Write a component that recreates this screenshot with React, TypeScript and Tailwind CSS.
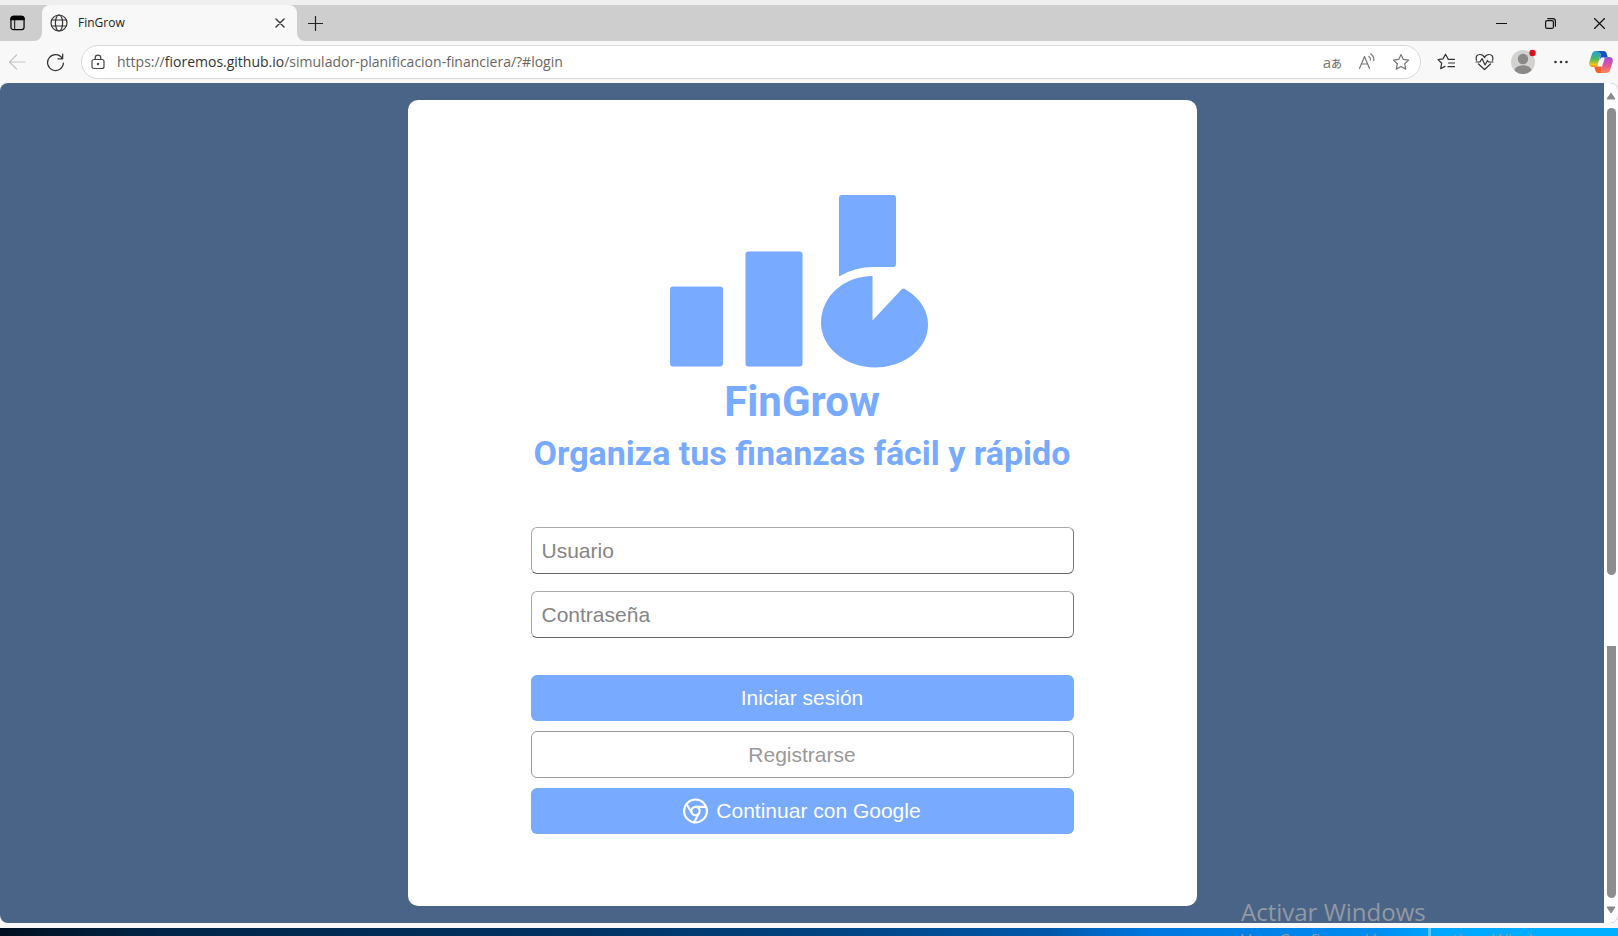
import React from "react";

const stroke = { fill: "none", stroke: "currentColor", strokeLinecap: "round", strokeLinejoin: "round" } as const;

function TabStrip() {
  return (
    <div className="flex h-9 bg-[#cecece]">
      <button aria-label="Acciones de pestañas" className="flex w-[42px] items-center justify-center pr-2">
        <svg width="15" height="16" viewBox="0 0 16 16" {...stroke} strokeWidth="1.3">
          <rect x="1" y="1" width="14" height="14" rx="2.5" />
          <path d="M1 3.5A2.5 2.5 0 0 1 3.5 1h9A2.5 2.5 0 0 1 15 3.5V4.500H1z" fill="#000" />
          <path d="M5 5v10" strokeWidth="1" />
        </svg>
      </button>
      <div className="relative flex w-[255px] items-center rounded-t-lg bg-[#f8f8f8] pl-2 pr-3">
        <svg className="absolute -left-2 bottom-0" width="8" height="8"><path d="M8 0v8H0a8 8 0 0 0 8-8z" fill="#f8f8f8" /></svg>
        <svg className="absolute -right-2 bottom-0" width="8" height="8"><path d="M0 0v8h8a8 8 0 0 1-8-8z" fill="#f8f8f8" /></svg>
        <svg width="18" height="18" viewBox="0 0 18 18" {...stroke} strokeWidth="1.2" className="text-[#333]">
          <circle cx="9" cy="9" r="8" />
          <ellipse cx="9" cy="9" rx="3.6" ry="8" />
          <path d="M1.700 6h14.600M1.700 12h14.600" />
        </svg>
        <span className="ml-2.5 grow text-xs text-[#222]">FinGrow</span>
        <button aria-label="Cerrar pestaña" className="text-[#333]">
          <svg width="10" height="10" viewBox="0 0 10 10" {...stroke} strokeWidth="1.400"><path d="M1 1l8 8M9 1L1 9" /></svg>
        </button>
      </div>
      <button aria-label="Nueva pestaña" className="ml-[11px] text-[#222]">
        <svg width="15" height="15" viewBox="0 0 15 15" {...stroke} strokeWidth="1.200"><path d="M7.500 .5v14M.5 7.500h14" /></svg>
      </button>
      <div className="ml-auto flex items-center gap-[38px] pr-[13px] text-[#111]">
        <button aria-label="Minimizar"><svg width="11" height="11" viewBox="0 0 11 11" {...stroke} strokeWidth="1.200"><path d="M.5 5.500h10" /></svg></button>
        <button aria-label="Restaurar">
          <svg width="11" height="11" viewBox="0 0 11 11" {...stroke} strokeWidth="1.200">
            <rect x=".6" y="2.600" width="7.800" height="7.800" rx="1.500" />
            <path d="M2.800.6h5a2.600 2.600 0 0 1 2.600 2.600v5" />
          </svg>
        </button>
        <button aria-label="Cerrar"><svg width="11" height="11" viewBox="0 0 11 11" {...stroke} strokeWidth="1.200"><path d="M.5.5l10 10M10.500.5l-10 10" /></svg></button>
      </div>
    </div>
  );
}

const STAR = "M9 1.500l2.300 4.900 5.300.7-3.900 3.700 1 5.300L9 13.500l-4.700 2.600 1-5.300L1.400 7.100l5.300-.7z";

function Toolbar() {
  return (
    <div className="flex h-[42px] items-center bg-[#f8f8f8] pl-2 pr-[5px]">
      <button aria-label="Atrás" className="text-[#c4c4c4]">
        <svg width="18" height="18" viewBox="0 0 18 18" {...stroke} strokeWidth="1.200"><path d="M17 9H1.500M8.500 2L1.500 9l7 7" /></svg>
      </button>
      <button aria-label="Actualizar" className="ml-5 text-[#333]">
        <svg width="19" height="19" viewBox="0 0 18 18" {...stroke} strokeWidth="1.200"><path d="M16.500 9.500A7.500 7.500 0 1 1 15.300 5M15.800 1v4.500h-4.500" /></svg>
      </button>
      <div className="ml-4 flex h-[34px] grow items-center rounded-full border border-[#d9d9d9] bg-white pl-2 pr-2.5 text-[#777]">
        <svg width="16" height="17" viewBox="0 0 16 17" {...stroke} strokeWidth="1.200" className="text-[#444]">
          <rect x="2" y="5.500" width="12" height="9" rx="2" />
          <path d="M5.200 5.500V4a2.800 2.800 0 0 1 5.600 0v1.500" />
          <circle cx="8" cy="10" r=".6" fill="currentColor" />
        </svg>
        <a href="#login" className="ml-[11px] grow text-sm text-[#666]">
          https://<span className="text-[#333]">fioremos.github.io</span>/simulador-planificacion-financiera/?#login
        </a>
        <div className="flex items-center gap-4">
          <button aria-label="Traducir" className="flex items-baseline text-[15px] leading-5">a<span className="font-['Noto_Sans_CJK_JP',sans-serif] text-[11px] font-medium leading-5">あ</span></button>
          <button aria-label="Leer en voz alta">
            <svg width="18" height="18" viewBox="0 0 18 18" {...stroke} strokeWidth="1.200">
              <path d="M1.500 15.500L6.500 3.500l5 12M3.300 11h6.500M10.800 3.500q2 1.300 1.700 3.500M12.800 1q3.500 2.500 3 6.500" />
            </svg>
          </button>
          <button aria-label="Agregar a favoritos"><svg width="18" height="18" viewBox="0 0 18 18" {...stroke} strokeWidth="1.200"><path d={STAR} /></svg></button>
        </div>
      </div>
      <div className="ml-4 flex items-center gap-5 text-[#333]">
        <button aria-label="Favoritos">
          <svg width="18" height="18" viewBox="0 0 18 18" {...stroke} strokeWidth="1.200">
            <path d="M11 5.800L8.500 1.300 6 5.900l-5 .7 3.700 3.600-1 5.500 4.300-2.300M11 6.300h6.500M11.500 10h6M11 13.700h6.500" />
          </svg>
        </button>
        <button aria-label="Bienestar">
          <svg width="19" height="18" viewBox="0 0 19 18" {...stroke} strokeWidth="1.200">
            <path d="M1.500 7.300C.2 3.500 2.500 1.500 5 1.500c2 0 3.500 1 4.500 3 1-2 2.500-3 4.500-3 2.500 0 4.800 2 3.500 5.800M3.500 11l6 5.500 6-5.500M1 9h4l2-3.500 3 6.500 2.500-4.500 1 1.500H18" />
          </svg>
        </button>
      </div>
      <button aria-label="Perfil" className="ml-4">
        <svg width="26" height="26" viewBox="0 0 26 26">
          <circle cx="13" cy="13" r="12" fill="#d3d2d0" />
          <circle cx="13" cy="10" r="5.200" fill="#8b8987" />
          <path d="M4.500 21.500a8.500 5.200 0 0 1 17 0A12 12 0 0 1 4.500 21.500z" fill="#8b8987" />
          <circle cx="22.500" cy="4" r="3.200" fill="#d80f18" />
        </svg>
      </button>
      <button aria-label="Más" className="ml-[18px] text-[#333]">
        <svg width="14" height="4" viewBox="0 0 14 4" fill="currentColor"><circle cx="1.500" cy="2" r="1.300" /><circle cx="7" cy="2" r="1.300" /><circle cx="12.500" cy="2" r="1.300" /></svg>
      </button>
      <button aria-label="Copilot" className="ml-[21px]">
        <svg width="24" height="22" viewBox="0 0 24 22">
          <defs>
            <linearGradient id="cl" x1="0" y1="0" x2="0" y2="1"><stop offset="0" stopColor="#1f9de0" /><stop offset=".5" stopColor="#4bb865" /><stop offset=".85" stopColor="#f4c414" /><stop offset="1" stopColor="#f08a1c" /></linearGradient>
            <linearGradient id="cr" x1="0" y1="0" x2="0" y2="1"><stop offset="0" stopColor="#a34de0" /><stop offset=".5" stopColor="#e0559c" /><stop offset="1" stopColor="#fb8a54" /></linearGradient>
          </defs>
          <path d="M7 0h8.500c-2 0-3 1.200-3.600 3L9 12.500C8.300 15 7.200 16 5 16H3.500C.5 16-.3 13.500.5 10.500L2.600 4C3.400 1.400 4.500 0 7 0z" fill="url(#cl)" />
          <path d="M17 22H8.500c2 0 3-1.200 3.600-3L15 9.500C15.700 7 16.800 6 19 6h1.500c3 0 3.800 2.500 3 5.500L21.400 18c-.8 2.600-1.900 4-4.400 4z" fill="url(#cr)" />
          <path d="M8 0h6.500c2 0 2.700 1 3.300 3l.9 3c-2.200 0-3.200 1-3.900 3h-4.200L11.900 3C11 1 10 .5 8 0z" fill="#1a4fc4" />
          <path d="M16 22H9.500c-2 0-2.700-1-3.300-3L5.300 16c2.200 0 3.200-1 3.900-3h4.400L12.100 19c-.4 1.500-1 3 3.900 3z" fill="#f4602c" />
          <path d="M11.900 6.500h3.900c-.6.700-.8 1.600-1.100 2.500l-1.900 6.500H8.300c.5-.8.700-1.500 1-2.500z" fill="#fff" />
        </svg>
      </button>
    </div>
  );
}

function Logo() {
  return (
    <svg width="264" height="174" viewBox="0 0 264 174" fill="#78aaff" role="img" aria-label="FinGrow">
      <rect x="0" y="92.5" width="53" height="80" rx="3" />
      <rect x="75.500" y="57.500" width="57" height="115" rx="3" />
      <path d="M172 1h51q3 0 3 3v66q0 3-3 3h-19q-20 0-35 9.500v-78.500q0-3 3-3z" />
      <path d="M202.500 82v44.500L231.500 95.500q2-2 4 0A53 43 0 0 1 258 131A53 42.500 0 0 1 205 173.500A54 45 0 0 1 151 128.500A51.500 46.500 0 0 1 202.500 82z" />
    </svg>
  );
}

const field =
  "h-[47px] w-full rounded-md border border-[#aaa] border-r-[#777] border-b-[#666] bg-white px-2.5 text-[21px] text-[#333] outline-none placeholder:text-[#858585]";
const action = "flex w-full items-center justify-center gap-2 rounded-md text-[21px]";
const filled = action + " h-[46px] bg-[#78aaff] text-white";
const outlined = action + " h-[47px] border border-[#999] bg-white text-[#999]";

function LoginCard() {
  return (
    <main className="flex w-[789px] max-w-full flex-col items-center self-start rounded-[10px] bg-white px-4 pb-[72px] pt-[94px]">
      <Logo />
      <h1 className="mt-2 font-['Roboto',sans-serif] text-[42px] font-bold leading-[52px] text-[#78aaff]">FinGrow</h1>
      <h2 className="font-['Roboto',sans-serif] text-[34px] font-bold leading-[50px] text-[#78aaff]">Organiza tus finanzas fácil y rápido</h2>
      <form className="mt-[49px] flex w-[543px] max-w-full flex-col font-['Liberation_Sans',sans-serif]">
        <input aria-label="Usuario" placeholder="Usuario" className={field} />
        <input aria-label="Contraseña" type="password" placeholder="Contraseña" className={field + " mt-[17px]"} />
        <div className="mt-[37px] flex flex-col gap-[10px]">
          <button type="submit" className={filled}>Iniciar sesión</button>
          <button type="button" className={outlined}>Registrarse</button>
          <button type="button" className={filled}>
            <svg width="25" height="26" viewBox="0 0 24 24" {...stroke} strokeWidth="2">
              <circle cx="12" cy="12" r="11" />
              <circle cx="12" cy="12" r="4" />
              <path d="M12 8h10M8.500 14L3.500 5.500M15.500 14l-5 9" />
            </svg>
            Continuar con Google
          </button>
        </div>
      </form>
    </main>
  );
}

function ScrollBar() {
  return (
    <div className="flex w-3.5 flex-col items-center bg-white py-[9px]">
      <svg width="10" height="8"><path d="M5 1L9 7H1z" fill="#8a8a8a" stroke="#8a8a8a" strokeLinejoin="round" /></svg>
      <div className="mt-2 h-[467px] w-[9px] rounded-full bg-[#8d8d8d]" />
      <div className="mt-[71px] w-[9px] grow rounded-b-full bg-[#8d8d8d]" />
      <svg className="mt-2" width="10" height="8"><path d="M5 7L1 1h8z" fill="#8a8a8a" stroke="#8a8a8a" strokeLinejoin="round" /></svg>
    </div>
  );
}

export default function App() {
  return (
    <div className="relative flex h-screen flex-col overflow-hidden bg-[#f8f8f8] font-['Open_Sans',sans-serif]">
      <div className="h-[5px] bg-[#efefef]" />
      <TabStrip />
      <Toolbar />
      <div className="flex grow overflow-hidden rounded-lg bg-[#4a6488]">
        <div className="flex grow justify-center pt-[17px]"><LoginCard /></div>
        <ScrollBar />
      </div>
      <div className="mt-[5px] flex h-2 shrink-0 justify-end bg-[linear-gradient(to_right,#001021_0%,#002548_10%,#003262_35%,#004483_52%,#0058ab_65%,#0078e0_71%,#008cf0_85%,#00a8ff_89%,#00b0ff_100%)]">
        <div className="mr-[187px] w-[3px] bg-[#5cc4ff]" />
      </div>
      <div className="absolute left-[1241px] top-[896px] whitespace-nowrap text-[#9299a2]">
        <p className="text-2xl leading-8">Activar Windows</p>
        <p className="text-[17px] leading-6">Ve a Configuración para activar Windows.</p>
      </div>
    </div>
  );
}
